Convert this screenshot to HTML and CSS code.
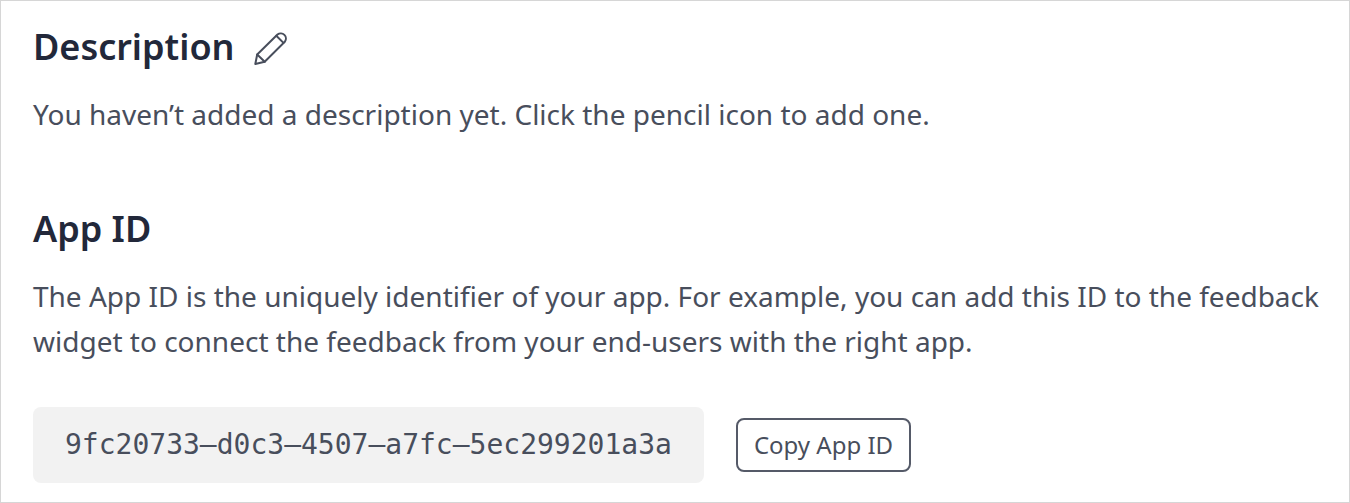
FILE: index.html
```html
<!DOCTYPE html>
<html lang="en">
<head>
<meta charset="utf-8">
<title>App settings</title>
<link rel="stylesheet" href="styles.css">
</head>
<body>
<main class="panel">
  <section class="description">
    <div class="heading-row">
      <h2>Description</h2>
      <svg class="pencil" viewBox="0 0 36 36" width="36" height="36" fill="none" stroke="currentColor" stroke-width="2" stroke-linejoin="round" stroke-linecap="round"><path d="M3.300 34l1.900-9.500L25.500 4.500a5.200 5.200 0 0 1 7.300 7.300L12.700 31.700z"/><path d="M5.200 24.500l7.500 7.200M24.300 5.700l7.200 7.200"/></svg>
    </div>
    <p>You haven’t added a description yet. Click the pencil icon to add one.</p>
  </section>
  <section class="app-id">
    <h2>App ID</h2>
    <p>The App ID is the uniquely identifier of your app. For example, you can add this ID to the feedback widget to connect the feedback from your end-users with the right app.</p>
    <div class="id-row">
      <code class="id-value">9fc20733–d0c3–4507–a7fc–5ec299201a3a</code>
      <button class="copy" type="button">Copy App ID</button>
    </div>
  </section>
</main>
</body>
</html>
```

FILE: styles.css
```css
* { box-sizing: border-box; }
body { margin: 0; background: #fff; color: #484e5c; font-family: "Noto Sans", sans-serif; }
.panel { height: 503px; border: 1px solid #d6d6d6; padding: 22px 24px 0 32px; overflow: hidden; }
h2 { margin: 0; font-size: 36px; line-height: 48px; font-weight: 600; color: #22283a; }
p { margin: 0; font-size: 28px; line-height: 45px; }
.heading-row { display: flex; align-items: center; gap: 17px; }
.pencil { margin-top: 2px; }
.description p { margin-top: 21px; }
.app-id { margin-top: 68px; }
.app-id p { margin-top: 21px; }
.id-row { display: flex; align-items: center; gap: 32px; margin-top: 43px; }
.id-value { display: block; width: 671px; height: 76px; padding: 0 32px; border-radius: 8px; background: #f2f2f2; font: 28px/76px "DejaVu Sans Mono", monospace; white-space: nowrap; }
.copy { width: 175px; height: 54px; padding: 0; border: 2px solid #555a68; border-radius: 8px; background: #fff; color: #484e5c; font: 400 24px/48px "Noto Sans", sans-serif; }
```
